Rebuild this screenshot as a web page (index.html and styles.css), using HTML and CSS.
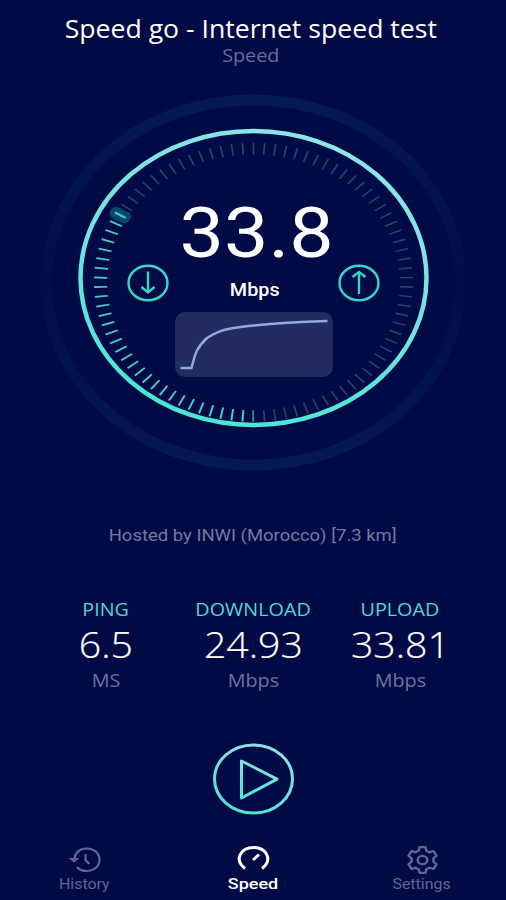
FILE: index.html
```html
<!DOCTYPE html>
<html lang="en">
<head>
    <meta charset="UTF-8">
    <meta name="viewport" content="width=device-width, initial-scale=1.0">
    <title>Speed go - Internet speed test</title>
    <link rel="stylesheet" href="styles.css">
</head>
<body>
    <div class="app">
        <header class="header">
            <h1 class="title">Speed go - Internet speed test</h1>
            <p class="subtitle">Speed</p>
        </header>

        <section class="dial">
            <svg class="dial-rings" viewBox="0 0 440 400">
                <defs>
                    <linearGradient id="ring" x1="0.7" y1="0" x2="0.3" y2="1">
                        <stop offset="0" stop-color="#8fe4ea"/>
                        <stop offset="0.5" stop-color="#72e3df"/>
                        <stop offset="1" stop-color="#43e8d6"/>
                    </linearGradient>
                    <linearGradient id="halo" x1="0" y1="0" x2="0" y2="1">
                        <stop offset="0" stop-color="#041a50"/>
                        <stop offset="0.5" stop-color="#041a50" stop-opacity="0.15"/>
                        <stop offset="1" stop-color="#041a50"/>
                    </linearGradient>
                </defs>
                <ellipse cx="220.5" cy="202.5" rx="207" ry="182.5" fill="none" stroke="url(#halo)" stroke-width="11"/>
                <ellipse cx="220.5" cy="198" rx="173" ry="147" fill="none" stroke="url(#ring)" stroke-width="4.5"/>
                <!-- 90 ticks, starting at the bottom -->
                <g transform="translate(220.5 202.3) scale(1.144 1) rotate(90)" fill="none" stroke-width="11.5">
                    <circle class="ticks" r="133.7" pathLength="900"/>
                    <path class="ticks-lit" d="M133.7 0A133.7 133.7 0 0 1 -66.85 115.8" pathLength="300"/>
                    <g transform="rotate(120)">
                        <rect class="marker" x="125" y="-6" width="19" height="12" rx="5"/>
                        <path class="marker-line" d="M129 0h11"/>
                    </g>
                </g>
            </svg>

            <div class="speed-value">33.8</div>
            <div class="speed-row">
                <svg class="arrow" viewBox="0 0 42 38">
                    <ellipse cx="21" cy="19" rx="19.5" ry="17.3"/>
                    <path d="M21 7.5v21M14.5 23l6.5 5.5 6.5-5.5"/>
                </svg>
                <span class="speed-unit">Mbps</span>
                <svg class="arrow" viewBox="0 0 42 38">
                    <ellipse cx="21" cy="19" rx="19.5" ry="17.3"/>
                    <path d="M21 30V8.500M14.500 13l6.500-5 6.500 5"/>
                </svg>
            </div>
            <svg class="chart" viewBox="0 0 158 65">
                <path d="M5.500 56H16.500C19.500 46 19 38 32 26C42 19.500 48 17.500 62 15.500C92 11.500 122 10 152.500 9"/>
            </svg>
        </section>

        <p class="host">Hosted by INWI (Morocco) [7.3 km]</p>

        <section class="results">
            <div class="result">
                <span class="label">PING</span>
                <span class="value">6.5</span>
                <span class="unit">MS</span>
            </div>
            <div class="result">
                <span class="label">DOWNLOAD</span>
                <span class="value">24.93</span>
                <span class="unit">Mbps</span>
            </div>
            <div class="result">
                <span class="label">UPLOAD</span>
                <span class="value">33.81</span>
                <span class="unit">Mbps</span>
            </div>
        </section>

        <button class="play" type="button" aria-label="Start">
            <svg viewBox="0 0 82 73">
                <defs>
                    <linearGradient id="play" x1="0.7" y1="0" x2="0.3" y2="1">
                        <stop offset="0" stop-color="#8fe0e8"/>
                        <stop offset="1" stop-color="#4fe3d2"/>
                    </linearGradient>
                </defs>
                <g fill="none" stroke="url(#play)" stroke-width="3">
                    <ellipse cx="41.500" cy="37" rx="39" ry="34"/>
                    <path d="M29.500 19V56L65 37.200Z" stroke-linejoin="round"/>
                </g>
            </svg>
        </button>

        <nav class="nav">
            <a class="nav-item">
                <svg viewBox="0 0 34 30">
                    <path d="M7.500 14.500C7.500 8 12.500 3.500 19.500 3.500c7.500 0 13 4.700 13 11.200S27 26 19.500 26c-4 0-7.500-1.500-9.500-4M18.500 9v6l4 4"/>
                    <path d="M1.500 13h11l-5.500 4.500z" class="solid"/>
                </svg>
                <span>History</span>
            </a>
            <a class="nav-item active">
                <svg viewBox="0 0 34 30">
                    <path d="M9 23.500C-2.500 14.500 5 2.500 17.500 2.500S37.500 14.500 26 23.500M17 15l6-5.500"/>
                </svg>
                <span>Speed</span>
            </a>
            <a class="nav-item">
                <svg viewBox="0 0 34 30">
                    <g transform="translate(17.5 15) scale(1.14 1)" stroke-linejoin="round">
                        <path d="M-2.600 -12.800H2.600L3.400 -9.200L6 -7.700L9.600 -8.900L12.300 -4.200L9.600 -1.700V1.700L12.300 4.200L9.600 8.900L6 7.700L3.400 9.200L2.600 12.800H-2.600L-3.400 9.200L-6 7.700L-9.600 8.900L-12.300 4.200L-9.600 1.700V-1.700L-12.300 -4.200L-9.600 -8.900L-6 -7.700L-3.400 -9.200Z"/>
                        <circle r="4.200"/>
                    </g>
                </svg>
                <span>Settings</span>
            </a>
        </nav>
    </div>
</body>
</html>
```

FILE: styles.css
```css
* {
    box-sizing: border-box;
    margin: 0;
    padding: 0;
}

body {
    background: #000a45;
    font-family: "Open Sans", sans-serif;
    color: white;
}

.app {
    width: 506px;
    height: 900px;
    display: flex;
    flex-direction: column;
    align-items: center;
    overflow: hidden;
}

.header {
    height: 78px;
    padding-top: 11px;
    padding-right: 4px;
    text-align: center;
}

.title {
    font-size: 25px;
    font-weight: 400;
    line-height: 34px;
    white-space: nowrap;
    transform: scaleX(1.065);
}

.subtitle {
    font-size: 18px;
    line-height: 21px;
    color: #666e9c;
    transform: scaleX(1.1);
}

.dial {
    position: relative;
    width: 440px;
    height: 400px;
    padding-top: 115px;
    display: flex;
    flex-direction: column;
    align-items: center;
    font-family: Roboto, sans-serif;
}

.dial-rings {
    position: absolute;
    inset: 2px 0 0 0;
    width: 440px;
    height: 400px;
}

.ticks {
    stroke: #343d73;
    stroke-dasharray: 1.6 8.4;
    stroke-dashoffset: 0.8;
}

.ticks-lit {
    stroke: #3fcfc1;
    stroke-dasharray: 1.8 8.2;
    stroke-dashoffset: -9.1;
}

.marker {
    fill: #064868;
}

.marker-line {
    stroke: #3cc8d2;
    stroke-width: 2;
}

.speed-value {
    font-size: 70px;
    line-height: 80px;
    padding-left: 7px;
    transform: scaleX(1.13);
}

.speed-row {
    width: 253px;
    height: 38px;
    margin-top: -9px;
    margin-left: 1px;
    display: flex;
    justify-content: space-between;
    align-items: center;
}

.arrow {
    width: 42px;
    height: 38px;
    fill: none;
    stroke: #3bd3c5;
    stroke-width: 2.4;
}

.speed-unit {
    font-size: 18px;
    font-weight: 500;
    padding-top: 12px;
    padding-left: 2px;
    transform: scaleX(1.1);
}

.chart {
    width: 158px;
    height: 65px;
    margin-top: 10px;
    margin-left: 1px;
    border-radius: 10px;
    background: #232c61;
    fill: none;
    stroke: #94a9e0;
    stroke-width: 2.4;
}

.host {
    margin-top: 46px;
    height: 22px;
    font: 400 16px/23px Roboto, sans-serif;
    color: #737aa3;
    transform: scaleX(1.155);
}

.results {
    width: 441px;
    height: 100px;
    margin-top: 51px;
    display: grid;
    grid-template-columns: repeat(3, 147px);
}

.result {
    display: flex;
    flex-direction: column;
    align-items: center;
}

.label {
    font-size: 17.5px;
    line-height: 24px;
    color: #55d5cf;
    transform: scaleX(1.13);
}

.value {
    font-size: 36px;
    font-weight: 300;
    line-height: 48px;
    transform: scaleX(1.09);
    -webkit-text-stroke: 0.2px white;
}

.unit {
    font-size: 18px;
    line-height: 22px;
    color: #6c739e;
    transform: scaleX(1.1);
}

.play {
    width: 82px;
    height: 73px;
    margin-top: 45px;
    border: none;
    background: none;
    cursor: pointer;
}

.nav {
    width: 506px;
    margin-top: 30px;
    display: grid;
    grid-template-columns: repeat(3, 1fr);
    font: 500 14px/18px Roboto, sans-serif;
    color: #5f6795;
}

.nav-item {
    display: flex;
    flex-direction: column;
    align-items: center;
}

.nav-item svg {
    width: 34px;
    height: 30px;
    fill: none;
    stroke: currentColor;
    stroke-width: 2.2;
}

.nav-item .solid {
    fill: currentColor;
    stroke: none;
}

.nav-item span {
    font-weight: 400;
    transform: scaleX(1.14);
}

.nav-item.active {
    color: white;
}

.nav-item.active svg {
    stroke-width: 3;
}

.nav-item.active span {
    font-size: 15px;
    font-weight: 500;
    transform: scaleX(1.2);
}
```
